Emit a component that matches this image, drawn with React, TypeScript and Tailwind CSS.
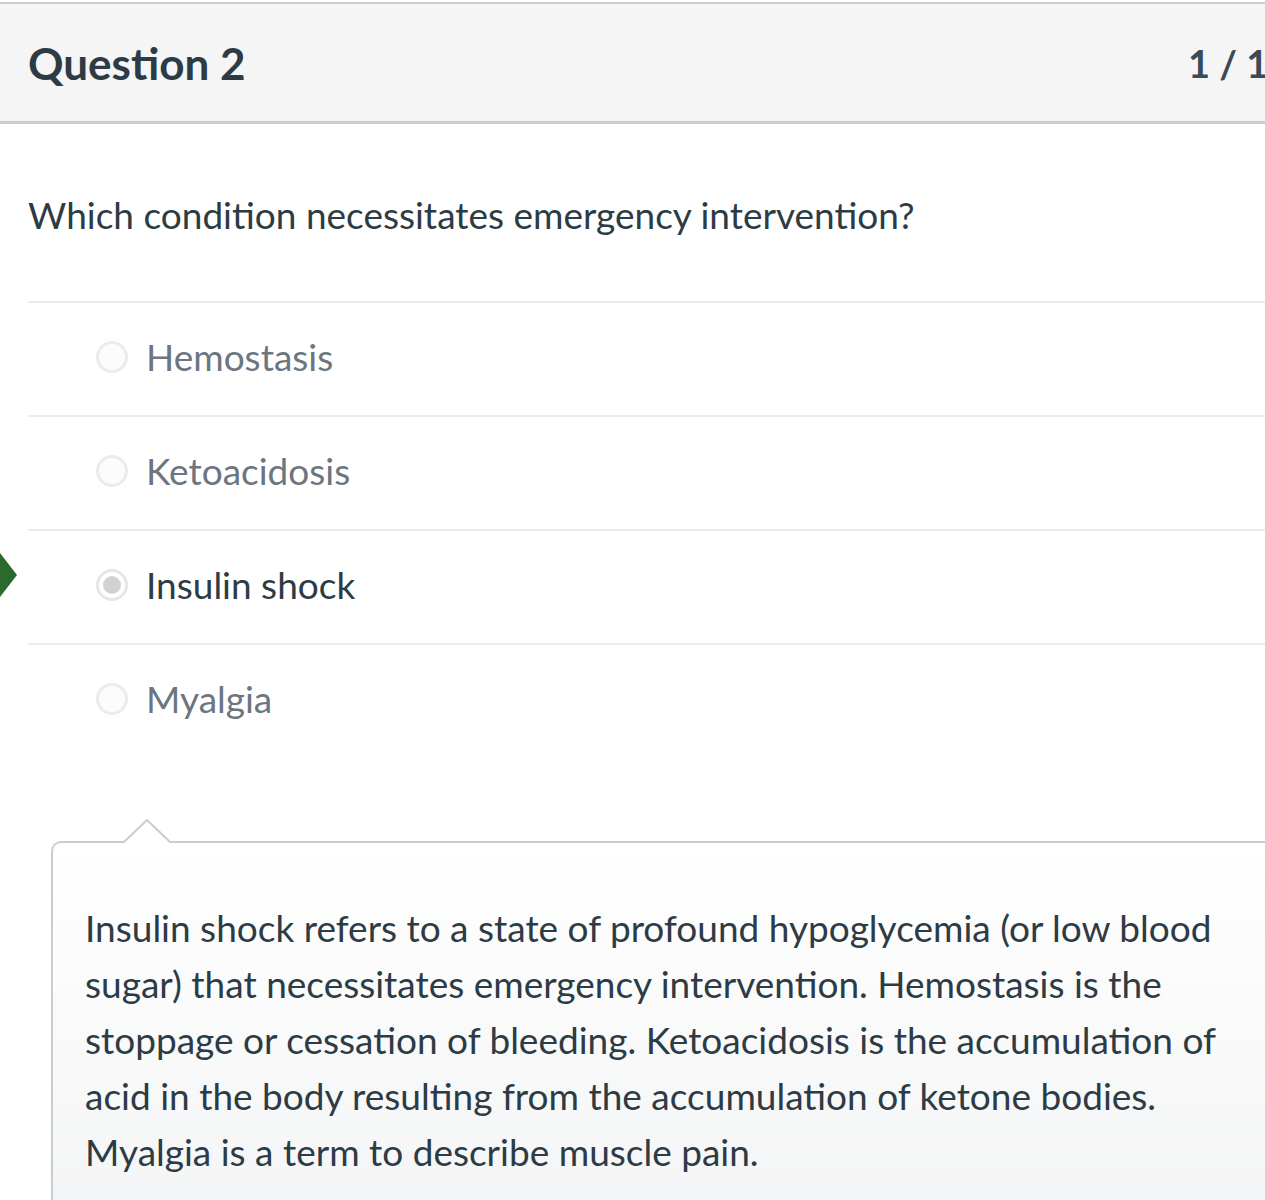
import { useState } from "react";

const answers = [
  { id: 1, text: "Hemostasis" },
  { id: 2, text: "Ketoacidosis" },
  { id: 3, text: "Insulin shock" },
  { id: 4, text: "Myalgia" },
];

function CorrectArrow() {
  return (
    <svg
      width="20"
      height="44"
      viewBox="0 0 20 44"
      className="absolute left-[-28px] top-[22px]"
    >
      <polygon points="-10,0 0,0 17,22 0,44 -10,44" fill="#2a6a2c" />
    </svg>
  );
}

export default function App() {
  const [selected] = useState(3);

  return (
    <div
      className="w-[1265px] h-[1200px] overflow-hidden bg-white text-[#2d3b45]"
      style={{ fontFamily: "Lato, 'Open Sans', sans-serif" }}
    >
      <div className="w-[1340px] pt-[2px]">
        {/* header */}
        <div className="h-[122px] flex items-center bg-[#f5f5f5] border-t-2 border-b-[3px] border-[#c7cdd1] px-[28px]">
          <h2 className="w-[1160px] shrink-0 text-[44px] font-bold leading-none">
            Question 2
          </h2>
          <span className="shrink-0 whitespace-nowrap text-[38px] font-bold leading-none text-[#394b58]">
            1 / 1 pts
          </span>
        </div>

        <div className="pl-[28px]">
          <p className="pt-[63px] pb-[58px] text-[37px] leading-[56px]">
            Which condition necessitates emergency intervention?
          </p>

          {answers.map((a) => (
            <div
              key={a.id}
              className="relative h-[114px] flex items-center border-t-2 border-[#ececec] pl-[68px] pb-[4px]"
            >
              {a.id === selected && <CorrectArrow />}
              <span
                className={
                  a.id === selected
                    ? "w-[32px] h-[32px] rounded-full border-[3px] border-[#e6e6e6] bg-white flex items-center justify-center"
                    : "w-[32px] h-[32px] rounded-full border-[3px] border-[#ebebeb] bg-[#fcfcfc]"
                }
              >
                {a.id === selected && (
                  <span className="w-[18px] h-[18px] rounded-full bg-[#d2d2d2]" />
                )}
              </span>
              <span
                className={
                  a.id === selected
                    ? "ml-[18px] text-[37px] text-[#2d3b45]"
                    : "ml-[18px] text-[37px] text-[#6b7680]"
                }
              >
                {a.text}
              </span>
            </div>
          ))}

          {/* comment box */}
          <div className="relative ml-[23px] mt-[84px] h-[400px] rounded-tl-[10px] border-t-2 border-l-2 border-[#c7cdd1] bg-gradient-to-b from-white to-[#f3f4f5] pl-[32px] pt-[57px] pr-[60px]">
            <svg
              width="46"
              height="24"
              viewBox="0 0 46 24"
              className="absolute left-[71px] top-[-24px]"
            >
              <polygon points="0,24 23,1 46,24" fill="white" />
              <polyline
                points="0,23 23,1 46,23"
                fill="none"
                stroke="#c7cdd1"
                strokeWidth="2"
              />
            </svg>
            <p className="w-[1165px] text-[37px] leading-[56px]">
              Insulin shock refers to a state of profound hypoglycemia (or low
              blood sugar) that necessitates emergency intervention. Hemostasis
              is the stoppage or cessation of bleeding. Ketoacidosis is the
              accumulation of acid in the body resulting from the accumulation
              of ketone bodies. Myalgia is a term to describe muscle pain.
            </p>
          </div>
        </div>
      </div>
    </div>
  );
}
